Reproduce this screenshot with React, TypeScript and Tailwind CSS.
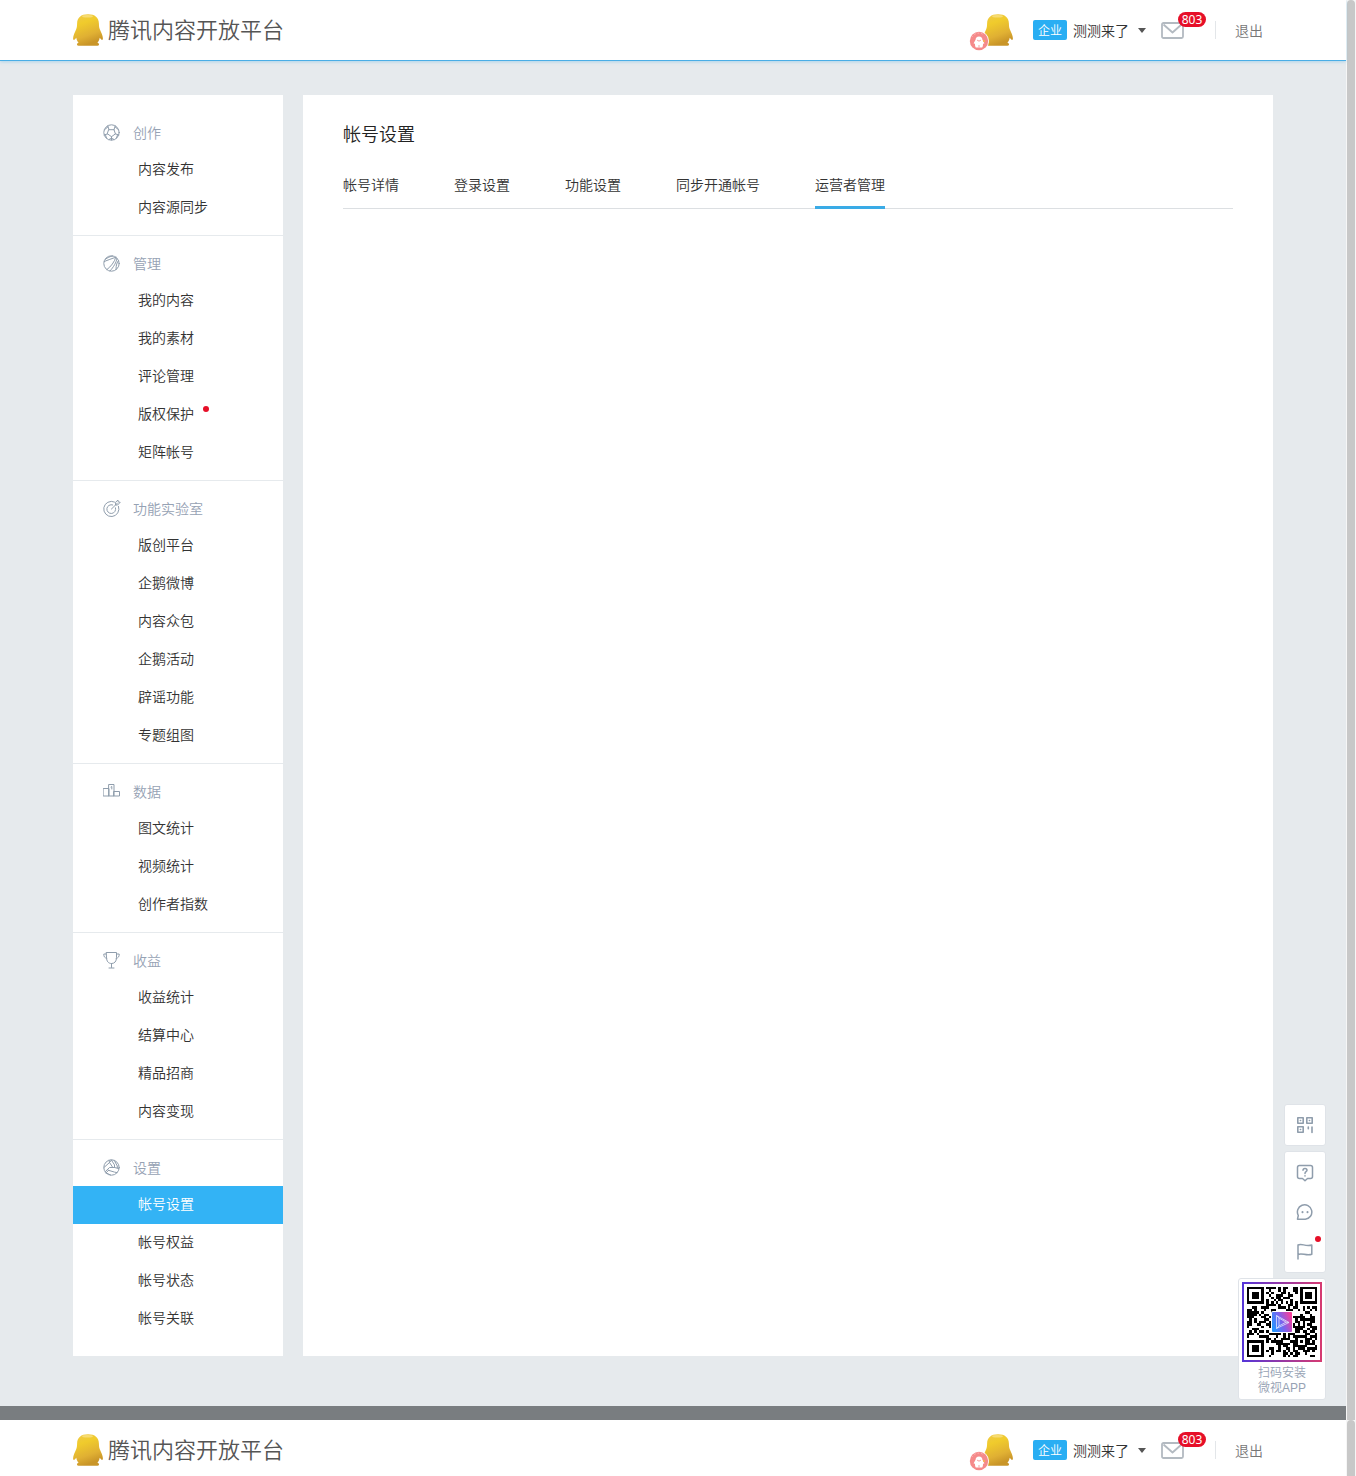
import type { ReactNode } from 'react';

const INK = '#8f9dac';

function Penguin({ id }: { id: string }) {
  return (
    <svg width="30" height="33" viewBox="0 0 30 33" aria-hidden="true">
      <defs>
        <linearGradient id={id} x1="0" y1="0" x2="0.35" y2="1">
          <stop offset="0" stopColor="#efc94a" />
          <stop offset="0.35" stopColor="#f0cb2c" />
          <stop offset="0.75" stopColor="#e0b033" />
          <stop offset="1" stopColor="#c99528" />
        </linearGradient>
      </defs>
      <path
        d="M15 .3C8 .3 4.300 3.600 4.100 9.500C4 12 3.900 13.500 3.200 15.200C1.700 18.600 .2 21.500 .1 24.300C.1 26.300 1 26.300 2.200 25L3.300 23.800C3.600 25.700 4.400 27.400 5.600 28.800C4.400 29.200 3.900 29.900 4 30.700C4.100 31.500 5 31.700 6.500 31.700H23.500C25 31.700 25.900 31.500 26 30.700C26.100 29.900 25.600 29.200 24.400 28.800C25.600 27.400 26.400 25.700 26.700 23.800L27.800 25C29 26.300 29.900 26.300 29.900 24.300C29.800 21.500 28.300 18.600 26.800 15.200C26.100 13.500 26 12 25.900 9.500C25.700 3.600 22 .3 15 .3Z"
        fill={`url(#${id})`}
      />
      <ellipse cx="14.500" cy="2.300" rx="5.500" ry="1.200" fill="#fbe79a" opacity=".6" />
    </svg>
  );
}

function PinkBadge() {
  return (
    <svg width="20" height="20" viewBox="0 0 20 20" aria-hidden="true">
      <circle cx="10" cy="10" r="10" fill="#fff" />
      <circle cx="10" cy="10" r="9.200" fill="#f58a8a" />
      <path d="M3 6a8 8 0 0 1 12-2" stroke="#fbb" strokeWidth="1" fill="none" strokeDasharray="1.500 2" />
      <path d="M10 5.500c-2.300 0-3.400 1.400-3.400 3.200L4.800 12c-.2 1 .4 1.100 1.200.4-.1 1.700.2 2.900.8 4h6.400c.6-1.100.9-2.300.8-4 .8.700 1.400.6 1.200-.4l-1.800-3.300c0-1.800-1.100-3.200-3.400-3.200Z" fill="#fff" />
      <path d="M8 9.200l1.500.4L10 10.400l.5-.8L12 9.200M10 14v2.400" stroke="#f58a8a" strokeWidth=".8" fill="none" />
      <circle cx="15" cy="10" r="1" fill="#f7b64a" />
    </svg>
  );
}

function Line({ children, width = 1 }: { children: ReactNode; width?: number }) {
  return (
    <svg width="18" height="18" viewBox="0 0 18 18" fill="none" stroke={INK} strokeWidth={width} strokeLinejoin="round" strokeLinecap="round" aria-hidden="true">
      {children}
    </svg>
  );
}

const icons = {
  football: (
    <Line>
      <circle cx="8.500" cy="9.500" r="7.700" />
      <path d="M6 6.700h5l1.400 4.200-3.900 2.800-3.900-2.800ZM6 6.700 4.800 2.900M11 6.700l1.200-3.800M4.600 10.900 1.200 12M12.400 10.900l3.400 1.100M8.500 13.700v3.300M4.900 3.900 1.500 6.800M12.100 3.900l3.400 2.900M2.500 12 3.500 15M14.500 12l-1 3M6 16.500l2.500-1.300 2.500 1.300" />
    </Line>
  ),
  basketball: (
    <Line>
      <circle cx="8.500" cy="9.500" r="7.700" />
      <path d="M1.200 7.500C4.500 6.300 9 4.500 12.800 3.200M4 15.500C8 12.500 11.500 8 12.800 3.200M2.500 5.200C4.500 3.600 7 2.500 9.600 2M13.800 4.500C13.500 8.500 10.500 13 7 17M15.500 6.500c-1.500 2-2.500 4.500-2.500 9" />
    </Line>
  ),
  target: (
    <Line>
      <path d="M11.500 3A7.600 7.600 0 1 0 15.500 7.300M9.700 5.900A4.400 4.400 0 1 0 12.500 8.800M8.500 10 14.500 4M12.600 5.700V3.300L14.900 1l.4 1.900 1.900.4-2.300 2.400Z" />
    </Line>
  ),
  podium: (
    <Line>
      <path d="M.5 6.500h5.500v7.500H.5ZM6 2.500h5v11.500H6ZM11 9.500h5.500V14H11ZM8 5 8.800 4.500V7" />
    </Line>
  ),
  trophy: (
    <Line>
      <path d="M3.500 1.500h10V6.500c0 4-2 6-5 6s-5-2-5-6ZM3.500 3H.8C.7 5.500 1.500 7 3.800 7.300M13.500 3h2.700c.1 2.500-.7 4-3 4.300M8.500 12.500v4M6 17h5" />
    </Line>
  ),
  volleyball: (
    <Line>
      <circle cx="8.500" cy="9.500" r="7.700" />
      <path d="M1 9.500 6.500 4.500 9.500 9M2.200 13.700l4.300-4.200h5l4.300 1M5.500 12.300l6 1.800 2.500.5M3.500 15l4 2M6.500 4.500 6 2.300M8.300 1.900l3.200 5v2.600M11.300 2.500l3 5.500V10M6.500 4.500 8.500 2.200M5.500 12.300 3 15" />
    </Line>
  ),
  qr: (
    <Line width={2}>
      <path d="M1.800 1.800h5.400v5.400H1.800ZM10.800 1.800h5.400v5.400h-5.400ZM1.800 10.800h5.400v5.400H1.800Z" strokeWidth="1.600" />
      <path d="M12.300 11v1.800M16 11v5.500M4.400 4.500h.2M13.400 4.500h.2M4.400 13.500h.2" strokeWidth="1.600" />
    </Line>
  ),
  question: (
    <Line width={2}>
      <path d="M3.500 1.500h11Q16.500 1.500 16.500 3.500v9Q16.500 14.500 14.500 14.500H11.500L9 16.700 6.500 14.500h-3Q1.500 14.500 1.500 12.500v-9Q1.500 1.500 3.500 1.500Z" strokeWidth="1.500" />
      <path d="M7 6.300C7 3.900 11 3.900 11 6.300 11 7.700 9 7.700 9 9.400M9 11.700v.2" strokeWidth="1.500" />
    </Line>
  ),
  chat: (
    <Line width={2}>
      <path d="M1.500 16.200 2.300 12.500A7.200 7.200 0 1 1 9.300 16.200Z" strokeWidth="1.500" />
      <path d="M6.500 9v.2M11.500 9v.2" />
    </Line>
  ),
  flag: (
    <Line width={2}>
      <path d="M2 17V3C6 .8 9 5 15.800 3V12.300C10 14.300 6 10.300 2 12.500" strokeWidth="1.500" />
    </Line>
  ),
};

const groups: { title: string; icon: ReactNode; items: string[] }[] = [
  { title: '创作', icon: icons.football, items: ['内容发布', '内容源同步'] },
  { title: '管理', icon: icons.basketball, items: ['我的内容', '我的素材', '评论管理', '版权保护', '矩阵帐号'] },
  { title: '功能实验室', icon: icons.target, items: ['版创平台', '企鹅微博', '内容众包', '企鹅活动', '辟谣功能', '专题组图'] },
  { title: '数据', icon: icons.podium, items: ['图文统计', '视频统计', '创作者指数'] },
  { title: '收益', icon: icons.trophy, items: ['收益统计', '结算中心', '精品招商', '内容变现'] },
  { title: '设置', icon: icons.volleyball, items: ['帐号设置', '帐号权益', '帐号状态', '帐号关联'] },
];

const tabs = ['帐号详情', '登录设置', '功能设置', '同步开通帐号', '运营者管理'];

function Header({ id }: { id: string }) {
  return (
    <header className="relative z-10 h-[61px] border-b border-[#4aaee6] bg-white shadow-[0_1px_3px_rgba(74,174,230,0.35)]">
      <div className="mx-auto flex h-[60px] max-w-[1200px] items-center justify-between">
        <a href="#home" className="flex items-center gap-[5px]">
          <Penguin id={`${id}-logo`} />
          <span className="whitespace-nowrap pb-1 text-[22px] leading-8 text-[#555]">腾讯内容开放平台</span>
        </a>
        <div className="flex items-center pr-[10px] text-sm leading-5 text-[#333]">
          <div className="relative mr-5 h-[33px] w-[30px]">
            <Penguin id={`${id}-avatar`} />
            <span className="absolute -left-[14px] top-[17px]">
              <PinkBadge />
            </span>
          </div>
          <span className="mr-[6px] h-5 w-[34px] rounded-xs bg-[#29aef3] text-center text-xs leading-[19px] text-white">企业</span>
          <button type="button" className="flex items-center gap-[9px]">
            测测来了
            <svg width="8" height="5" viewBox="0 0 8 5" aria-hidden="true">
              <path d="M0 0h8L4 5Z" fill="#555" />
            </svg>
          </button>
          <a href="#messages" aria-label="消息" className="relative ml-[15px]">
            <svg width="23" height="17" viewBox="0 0 23 17" fill="none" stroke="#b3bac1" strokeWidth="1.800" strokeLinejoin="round" aria-hidden="true">
              <rect x="1" y="1" width="21" height="15" rx="1.500" />
              <path d="m2.500 2.500 9 8 9-8" />
            </svg>
            <span className="absolute -top-[10px] left-[17px] h-[15px] w-7 rounded-full bg-[#e60f28] text-center font-['Noto_Sans'] text-xs font-normal leading-[15px] text-white">803</span>
          </a>
          <span className="ml-[31px] mr-[19px] h-[18px] w-px bg-[#e3e6e9]" />
          <button type="button" className="text-[#777]">退出</button>
        </div>
      </div>
    </header>
  );
}

function Sidebar() {
  return (
    <nav className="w-[210px] shrink-0 bg-white py-[10px] text-sm">
      {groups.map((group, index) => (
        <section key={group.title} className={index ? 'border-t border-[#e6eaed] py-2' : 'py-2'}>
          <h2 className="flex h-[38px] items-center gap-3 pl-[30px] text-[#96a2b4]">
            {group.icon}
            {group.title}
          </h2>
          <ul>
            {group.items.map((item) => (
              <li key={item}>
                <a
                  href="#menu"
                  className={
                    item === '帐号设置'
                      ? 'flex h-[38px] items-center bg-[#33b3f5] pb-1 pl-[65px] text-white'
                      : 'flex h-[38px] items-center pb-1 pl-[65px] text-[#333]'
                  }
                >
                  <span className="relative">
                    {item}
                    {item === '版权保护' && <span className="absolute -right-[15px] top-[3px] size-[6px] rounded-full bg-[#e60f28]" />}
                  </span>
                </a>
              </li>
            ))}
          </ul>
        </section>
      ))}
    </nav>
  );
}

const SIZE = 29;

function isDark(x: number, y: number): boolean {
  const corners = [[0, 0], [SIZE - 7, 0], [0, SIZE - 7]];
  for (const [cx, cy] of corners) {
    const ring = Math.max(Math.abs(x - cx - 3), Math.abs(y - cy - 3));
    if (ring <= 4) return ring !== 2 && ring !== 4;
  }
  const align = Math.max(Math.abs(x - 22), Math.abs(y - 22));
  if (align <= 2) return align !== 1;
  if (x === 6 || y === 6) return (x + y) % 2 === 0;
  let n = Math.imul(x + 17, 374761393) ^ Math.imul(y + 5, 668265263);
  n = Math.imul(n ^ (n >>> 13), 1274126177);
  n = Math.imul(n ^ (n >>> 15), 2246822519);
  return ((n >>> 16) & 15) < 8;
}

const modules = Array.from({ length: SIZE * SIZE }, (_, i) => [i % SIZE, Math.floor(i / SIZE)]).filter(([x, y]) => isDark(x, y));

function QrCode() {
  return (
    <svg width="80" height="80" viewBox="0 0 80 80" role="img" aria-label="微视APP二维码">
      <defs>
        <linearGradient id="qr-frame">
          <stop offset="0" stopColor="#5535d8" />
          <stop offset="1" stopColor="#d63b72" />
        </linearGradient>
        <linearGradient id="qr-logo" x1="0" y1=".7" x2="1" y2=".3">
          <stop offset="0" stopColor="#2497ff" />
          <stop offset=".5" stopColor="#7c62ee" />
          <stop offset="1" stopColor="#f83e9b" />
        </linearGradient>
      </defs>
      <rect x="1" y="1" width="78" height="78" fill="#fff" stroke="url(#qr-frame)" strokeWidth="2" />
      <g transform="translate(5 5) scale(2.414)" shapeRendering="crispEdges">
        {modules.map(([x, y]) => (
          <rect key={`${x}-${y}`} x={x} y={y} width="1" height="1" />
        ))}
      </g>
      <rect x="29" y="29" width="22" height="22" rx="2" fill="#fff" />
      <rect x="30" y="30" width="20" height="20" rx="1" fill="url(#qr-logo)" />
      <path d="M34.500 33.500 47 40.500 34.500 46.500ZM37 36v8l7-3.800ZM34.500 33.500 37 36M34.500 46.500 37 44M47 40.500 44 40.200" fill="none" stroke="#dfe3ff" strokeWidth=".8" />
    </svg>
  );
}

const card = 'rounded-[3px] border border-[#dfe3e8] bg-white';

function FloatingTools() {
  return (
    <aside className="absolute bottom-5 right-5 flex flex-col items-end gap-[5px]">
      <button type="button" aria-label="二维码" className={`${card} grid size-[42px] place-items-center`}>
        {icons.qr}
      </button>
      <div className={`${card} flex w-[42px] flex-col items-center py-px`}>
        <button type="button" aria-label="帮助" className="grid h-[39px] w-10 place-items-center">
          {icons.question}
        </button>
        <button type="button" aria-label="反馈" className="grid h-[39px] w-10 place-items-center">
          {icons.chat}
        </button>
        <button type="button" aria-label="公告" className="relative grid h-10 w-10 place-items-center">
          {icons.flag}
          <span className="absolute right-1 top-[5px] size-[6px] rounded-full bg-[#e60f28]" />
        </button>
      </div>
      <div className={`${card} flex w-[88px] flex-col items-center px-[3px] pb-1 pt-[3px] text-center text-xs text-[#96a2b4]`}>
        <QrCode />
        <p className="h-[33px] pt-[2px] leading-[15px]">
          扫码安装
          <br />
          微视<span className="font-['Liberation_Sans']">APP</span>
        </p>
      </div>
    </aside>
  );
}

function Scrollbar() {
  return (
    <div className="w-[10px] shrink-0 bg-[#f6f6f6] pl-px">
      <div className="h-full w-2 rounded-t-full bg-[#c8c8c8]" />
    </div>
  );
}

export default function App() {
  return (
    <div className="flex h-screen flex-col overflow-hidden bg-white font-['Noto_Sans_CJK_SC',sans-serif] font-[350]">
      <div className="flex shrink-0">
        <div className="relative min-w-0 flex-1 bg-[#e6eaed]">
          <Header id="top" />
          <main className="mx-auto flex max-w-[1200px] gap-5 pb-[50px] pt-[34px]">
            <Sidebar />
            <section className="min-w-0 flex-1 bg-white px-10 pt-[19px]">
              <h1 className="mb-[9px] text-lg font-[350] leading-[38px] text-[#222]">帐号设置</h1>
              <div role="tablist" className="flex h-12 gap-[55px] border-b border-[#dcdfe2] text-sm text-[#333]">
                {tabs.map((tab) => (
                  <button
                    key={tab}
                    type="button"
                    role="tab"
                    aria-selected={tab === '运营者管理'}
                    className={
                      tab === '运营者管理'
                        ? '-mb-px whitespace-nowrap border-b-[3px] border-[#3aabe6]'
                        : '-mb-px whitespace-nowrap pb-[3px]'
                    }
                  >
                    {tab}
                  </button>
                ))}
              </div>
            </section>
          </main>
          <div className="h-[14px] bg-[#797d80]" />
          <FloatingTools />
        </div>
        <Scrollbar />
      </div>
      <div className="flex min-h-0 flex-1">
        <div className="min-w-0 flex-1 overflow-hidden">
          <Header id="next" />
        </div>
        <Scrollbar />
      </div>
    </div>
  );
}
